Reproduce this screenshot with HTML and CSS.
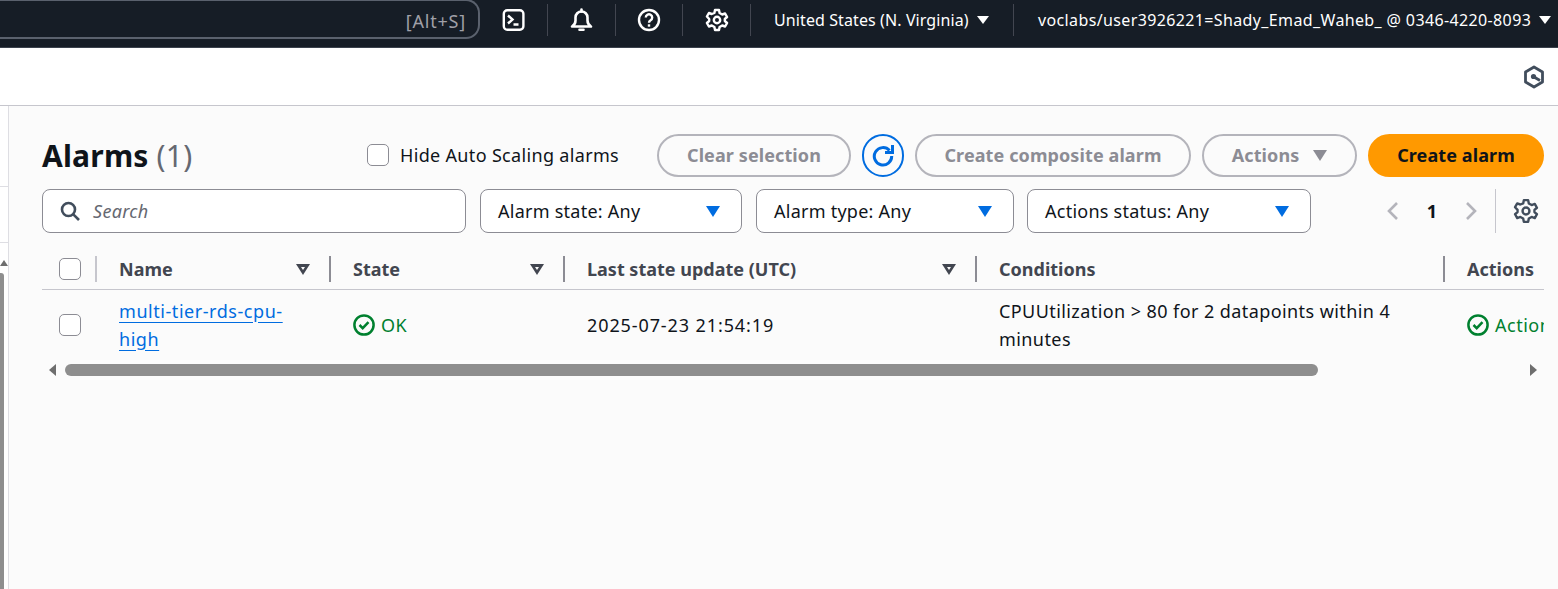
FILE: index.html
```html
<!DOCTYPE html>
<html>
<head>
	<meta charset="UTF-8">
	<title>Alarms</title>
	<link rel="stylesheet" href="styles.css">
</head>
<body>

<div class="topbar">
	<div class="search-end">[Alt+S]</div>
	<div class="top-icons">
		<div class="top-item wide">
			<svg width="24" height="24" viewBox="0 0 24 24" fill="none" stroke="#fff" stroke-width="2.400"><rect x="1.800" y="2.200" width="19.600" height="19.600" rx="3.500"/><path d="M6 7.500 10.500 11.500 6 15.500M11.500 16.500h5"/></svg>
		</div>
		<div class="top-item">
			<svg width="24" height="24" viewBox="0 0 24 24" fill="none" stroke="#fff" stroke-width="2.600"><path d="M2 18.500c2.500-1.500 3.500-3 3.500-6V9.500a6 6 0 0 1 12 0V12.500c0 3 1 4.500 3.500 6Z" stroke-linejoin="round"/><path d="M11.500 3.500V1.500M9.500 21.800h4" stroke-linecap="round"/></svg>
		</div>
		<div class="top-item narrow">
			<svg width="24" height="24" viewBox="0 0 24 24" fill="none" stroke="#fff" stroke-width="2.400"><circle cx="12" cy="12" r="10"/><path d="M8.800 9.500a3.200 3.200 0 1 1 4.800 2.800c-1 .6-1.600 1.200-1.600 2.400"/><path d="M12 16.300v2.400"/></svg>
		</div>
		<div class="top-item">
			<svg width="24" height="24" viewBox="0 0 24 24" fill="none" stroke="#fff" stroke-width="2.400" stroke-linejoin="round"><path d="M10 2h4l.6 3 2.600 1.500 2.900-1 2 3.500-2.300 2v2l2.300 2-2 3.500-2.900-1L14.600 19l-.6 3h-4l-.6-3-2.600-1.500-2.900 1-2-3.500 2.300-2v-2L1.900 8.500l2-3.500 2.900 1L9.400 5Z"/><circle cx="12" cy="12" r="3.200"/></svg>
		</div>
		<div class="top-item text region">United States (N. Virginia) <span class="caret"></span></div>
		<div class="top-item text last">voclabs/user3926221=Shady_Emad_Waheb_ @ 0346-4220-8093 <span class="caret"></span></div>
	</div>
</div>

<div class="subbar">
	<svg width="22" height="24" viewBox="0 0 22 24" fill="none" stroke="#414d5c" stroke-width="2.800" stroke-linejoin="round"><path d="M11 2 19.500 7v10L11 22 2.500 17V7Z"/><circle cx="10.500" cy="11.500" r="2.600" fill="#414d5c" stroke="none"/><path d="M11 12l6 3.500"/></svg>
</div>

<div class="page">
	<div class="side">
		<div class="side-row first"></div>
		<div class="side-row"></div>
		<div class="side-scroll">
			<span class="side-arrow"></span>
			<div class="side-thumb"></div>
		</div>
	</div>

	<div class="main">
		<div class="head">
			<h1>Alarms <span class="count">(1)</span></h1>
			<label class="hide-as"><span class="check"></span>Hide Auto Scaling alarms</label>
			<div class="btn clear">Clear selection</div>
			<div class="refresh">
				<svg width="24" height="24" viewBox="0 0 24 24" fill="none" stroke="#006ce0" stroke-width="3"><path d="M18.500 7.500A8.700 8.700 0 1 0 20.700 13"/><path d="M21.500 2v7.500h-7.500" stroke-linejoin="miter"/></svg>
			</div>
			<div class="btn composite">Create composite alarm</div>
			<div class="btn actions">Actions <span class="tri grey"></span></div>
			<div class="btn primary">Create alarm</div>
		</div>

		<div class="filters">
			<div class="search">
				<svg width="20" height="20" viewBox="0 0 20 20" fill="none" stroke="#414d5c" stroke-width="2.600"><circle cx="8.500" cy="8.500" r="6.500"/><path d="M13.300 13.300 19 19"/></svg>
				<span>Search</span>
			</div>
			<div class="select state">Alarm state: Any<span class="tri blue"></span></div>
			<div class="select type">Alarm type: Any<span class="tri blue"></span></div>
			<div class="select status">Actions status: Any<span class="tri blue"></span></div>
			<div class="pager">
				<svg width="14" height="20" viewBox="0 0 14 20" fill="none" stroke="#b4b4bb" stroke-width="2.600"><path d="M11 2 3 10l8 8"/></svg>
				<b>1</b>
				<svg width="14" height="20" viewBox="0 0 14 20" fill="none" stroke="#b4b4bb" stroke-width="2.600"><path d="m3 2 8 8-8 8"/></svg>
			</div>
			<div class="prefs">
				<svg width="26" height="26" viewBox="0 0 24 24" fill="none" stroke="#414d5c" stroke-width="2.200" stroke-linejoin="round"><path d="M10 2h4l.6 3 2.600 1.500 2.900-1 2 3.500-2.300 2v2l2.300 2-2 3.500-2.900-1L14.600 19l-.6 3h-4l-.6-3-2.600-1.500-2.900 1-2-3.500 2.300-2v-2L1.900 8.500l2-3.500 2.900 1L9.400 5Z"/><circle cx="12" cy="12" r="3.200"/></svg>
			</div>
		</div>

		<div class="table">
			<div class="tr th">
				<div class="c-check"><span class="check"></span></div>
				<div class="c-name">Name<span class="tri dark"></span></div>
				<div class="c-state">State<span class="tri dark"></span></div>
				<div class="c-update">Last state update (UTC)<span class="tri dark"></span></div>
				<div class="c-cond">Conditions</div>
				<div class="c-act">Actions</div>
			</div>
			<div class="tr td">
				<div class="c-check"><span class="check"></span></div>
				<div class="c-name"><a href="#">multi-tier-rds-cpu-high</a></div>
				<div class="c-state ok"><svg class="ok-icon" width="22" height="22" viewBox="0 0 22 22" fill="none" stroke="#00802f" stroke-width="2.500"><circle cx="11" cy="11" r="9.600"/><path d="m6.500 11 3.200 3.200 5.800-6"/></svg>OK</div>
				<div class="c-update">2025-07-23 21:54:19</div>
				<div class="c-cond">CPUUtilization &gt; 80 for 2 datapoints within 4 minutes</div>
				<div class="c-act ok"><svg class="ok-icon" width="22" height="22" viewBox="0 0 22 22" fill="none" stroke="#00802f" stroke-width="2.500"><circle cx="11" cy="11" r="9.600"/><path d="m6.500 11 3.200 3.200 5.800-6"/></svg>Actions enabled</div>
			</div>
		</div>

		<div class="hscroll">
			<span class="arrow-l"></span>
			<div class="thumb"></div>
			<span class="arrow-r"></span>
		</div>
	</div>
</div>

</body>
</html>
```

FILE: styles.css
```css
* {
	box-sizing: border-box;
}
html, body {
	height: 100%;
}
body {
	margin: 0;
	overflow: hidden;
	background: #fbfbfb;
	color: #0f141a;
	font-family: "Noto Sans", "Open Sans", sans-serif;
	font-size: 18px;
}

/* top bar */
.topbar {
	display: flex;
	height: 48px;
	background: #161d26;
	border-bottom: 1px solid #3b424d;
}
.search-end {
	width: 480px;
	height: 40px;
	margin-top: -1px;
	padding-right: 12px;
	text-align: right;
	line-height: 40px;
	color: #a0a0a8;
	font-size: 18px;
	letter-spacing: .8px;
	border: 2px solid #5a616d;
	border-left: none;
	border-radius: 0 14px 14px 0;
}
.top-icons {
	display: flex;
	align-items: center;
	height: 39px;
	flex: 1;
}
.top-item {
	display: flex;
	align-items: center;
	justify-content: center;
	width: 68px;
	height: 32px;
	border-left: 1px solid #424650;
}
.top-item.wide {
	width: 67px;
	border-left: none;
}
.top-item.narrow {
	width: 67px;
}
.top-item.text {
	justify-content: flex-start;
	gap: 7px;
	padding-left: 23px;
	color: #fff;
	font-size: 16px;
	white-space: nowrap;
}
.top-item.region {
	width: 263px;
	letter-spacing: .1px;
}
.top-item.last {
	width: auto;
	flex: 1;
	padding-left: 24px;
	letter-spacing: .37px;
}
.caret {
	display: inline-block;
	margin-left: 1px;
	border-left: 6px solid transparent;
	border-right: 6px solid transparent;
	border-top: 8px solid #fff;
}

/* second bar */
.subbar {
	display: flex;
	align-items: center;
	justify-content: flex-end;
	height: 58px;
	padding: 0 13px 0 0;
	background: #fff;
	border-bottom: 1px solid #c6c6cd;
}

.page {
	display: flex;
	height: 483px;
}

/* collapsed side panel */
.side {
	width: 9px;
	background: #fff;
	border-right: 1px solid #dedee3;
}
.side-row {
	border-bottom: 1px solid #dedee3;
	height: 56px;
}
.side-row.first {
	height: 81px;
}
.side-scroll {
	padding-top: 17px;
}
.side-arrow {
	display: block;
	width: 0;
	margin-bottom: 7px;
	border-left: 4px solid transparent;
	border-right: 4px solid transparent;
	border-bottom: 6px solid #6e6e6e;
}
.side-thumb {
	width: 4px;
	height: 330px;
	background: #8e8e8e;
	border-radius: 0 3px 0 0;
}

.main {
	flex: 1;
	padding: 27px 14px 0 33px;
	min-width: 0;
}

/* header row */
.head {
	display: flex;
	align-items: center;
	height: 44px;
}
h1 {
	margin: 0;
	width: 325px;
	font-size: 30px;
	font-weight: 700;
	letter-spacing: .2px;
}
.count {
	color: #656871;
	font-weight: 400;
}
.check {
	display: inline-block;
	width: 22px;
	height: 22px;
	border: 1.500px solid #8c8c94;
	border-radius: 5px;
	background: #fff;
}
.hide-as {
	display: flex;
	align-items: center;
	gap: 11px;
	width: 290px;
	letter-spacing: .33px;
	white-space: nowrap;
}
.btn {
	display: flex;
	align-items: center;
	justify-content: center;
	height: 43px;
	border: 2px solid #b4b4bb;
	border-radius: 22px;
	color: #8c8c94;
	font-weight: 700;
	letter-spacing: .1px;
	white-space: nowrap;
}
.clear {
	width: 194px;
}
.refresh {
	display: flex;
	align-items: center;
	justify-content: center;
	width: 42px;
	height: 43px;
	margin: 0 11px;
	border: 2px solid #006ce0;
	border-radius: 22px;
}
.composite {
	width: 276px;
}
.actions {
	width: 155px;
	margin-left: 11px;
	gap: 14px;
}
.primary {
	width: 176px;
	margin-left: 11px;
	background: #ff9900;
	border-color: #ff9900;
	color: #0f141a;
}

.tri {
	display: inline-block;
	width: 0;
	border-left: 7px solid transparent;
	border-right: 7px solid transparent;
	border-top: 11px solid;
}
.tri.grey {
	border-top-color: #8c8c94;
}
.tri.blue {
	border-top-color: #006ce0;
}
.tri.dark {
	position: relative;
	border-top: 11px solid #424650;
}
.tri.dark::after {
	content: "";
	position: absolute;
	left: -2.500px;
	top: -8px;
	border-left: 2.500px solid transparent;
	border-right: 2.500px solid transparent;
	border-top: 3.500px solid #fbfbfb;
}

/* filter row */
.filters {
	display: flex;
	align-items: center;
	margin-top: 11px;
	height: 46px;
}
.search {
	display: flex;
	align-items: center;
	gap: 13px;
	width: 424px;
	height: 44px;
	padding-left: 17px;
	background: #fff;
	border: 1px solid #8c8c94;
	border-radius: 8px;
	color: #656871;
	font-style: italic;
	letter-spacing: .3px;
}
.select {
	display: flex;
	align-items: center;
	justify-content: space-between;
	height: 44px;
	margin-left: 14px;
	padding: 0 21px 0 17px;
	background: #fff;
	border: 1px solid #8c8c94;
	border-radius: 8px;
	letter-spacing: .25px;
	white-space: nowrap;
}
.state {
	width: 262px;
}
.type {
	width: 258px;
}
.status {
	width: 284px;
	margin-left: 13px;
}
.pager {
	display: flex;
	align-items: center;
	justify-content: space-between;
	width: 92px;
	margin-left: 75px;
}
.prefs {
	display: flex;
	align-items: center;
	justify-content: flex-end;
	width: 48px;
	height: 44px;
	margin-left: 17px;
	padding-right: 4px;
	border-left: 1px solid #c6c6cd;
}

/* table */
.table {
	width: 1502px;
	margin-top: 11px;
	overflow: hidden;
}
.tr {
	display: flex;
	width: 1600px;
}
.tr > div {
	display: flex;
	align-items: center;
	flex-shrink: 0;
}
.th {
	height: 45px;
	font-weight: 700;
	color: #424650;
	position: relative;
}
.th > div {
	justify-content: space-between;
	padding: 0 19px 0 22px;
	height: 26px;
	margin-top: 11px;
	border-right: 2px solid #8c8c94;
}
.th > div:last-child {
	border-right: none;
}
.th .c-check {
	border-right-color: #c6c6cd;
	padding: 0 0 0 17px;
}
.th::after {
	content: "";
	position: absolute;
	left: 0;
	bottom: 0;
	width: 1502px;
	border-bottom: 1px solid #c6c6cd;
}
.td {
	height: 69px;
}
.td > div {
	padding-left: 22px;
	line-height: 28px;
}
.td .c-check {
	padding-left: 17px;
}
.c-check {
	width: 55px;
}
.c-name {
	width: 234px;
}
.c-state {
	width: 234px;
}
.c-update {
	width: 412px;
}
.td .c-update {
	letter-spacing: .9px;
}
.c-cond {
	width: 468px;
}
.td .c-cond {
	padding-right: 40px;
	letter-spacing: .42px;
}
.c-act {
	width: 200px;
	white-space: nowrap;
}
.td .c-name {
	padding-right: 40px;
}
a {
	color: #006ce0;
	letter-spacing: .55px;
	text-decoration: underline;
	text-underline-offset: 4px;
}
.ok {
	color: #00802f;
	letter-spacing: .5px;
}
.ok-icon {
	margin-right: 6px;
}

/* scrollbar under the table */
.hscroll {
	display: flex;
	align-items: center;
	justify-content: space-between;
	width: 1502px;
	height: 14px;
	margin-top: 4px;
	padding: 0 7px;
}
.thumb {
	width: 1253px;
	height: 12px;
	margin-left: 9px;
	margin-right: auto;
	background: #8e8e8e;
	border-radius: 6px;
}
.arrow-l, .arrow-r {
	width: 0;
	border-top: 6px solid transparent;
	border-bottom: 6px solid transparent;
}
.arrow-l {
	border-right: 7px solid #6e6e6e;
}
.arrow-r {
	border-left: 7px solid #6e6e6e;
}
```
